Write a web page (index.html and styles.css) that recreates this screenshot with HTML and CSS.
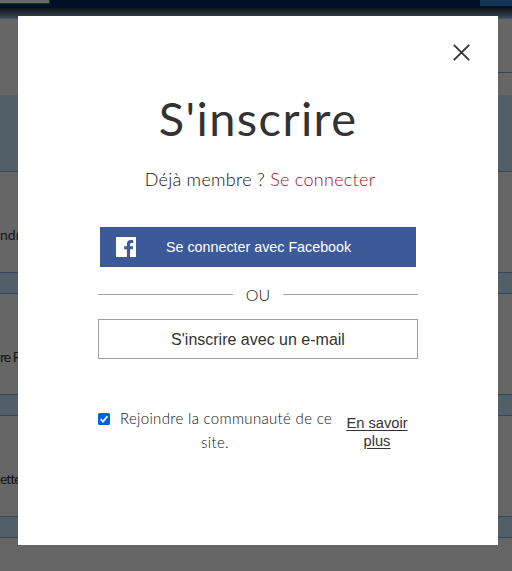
FILE: index.html
```
<!DOCTYPE html>
<html lang="fr">
<head>
    <meta charset="UTF-8">
    <meta name="viewport" content="width=device-width, initial-scale=1.0">
    <title>S'inscrire</title>
    <link rel="stylesheet" href="styles.css">
</head>
<body>
    <div class="page">
        <div class="header">
            <div class="header-left"></div>
            <div class="header-right"></div>
        </div>
        <div class="header-shadow"></div>
        <div class="top"><div class="top-line"></div></div>
        <div class="banner"></div>
        <div class="row">ndr</div>
        <div class="band"></div>
        <div class="row row-tight">re F</div>
        <div class="band"></div>
        <div class="row row-tight">ette</div>
        <div class="band"></div>
    </div>

    <div class="modal">
        <button class="close" aria-label="Fermer">
            <svg width="17" height="17" viewBox="0 0 17 17">
                <path d="M0.8 0.8L16.2 16.2M16.2 0.8L0.8 16.2" stroke="#333" stroke-width="1.8" fill="none"/>
            </svg>
        </button>
        <h1>S'inscrire</h1>
        <p class="member">Déjà membre ? <a href="#">Se connecter</a></p>
        <button class="facebook">
            <svg width="20" height="20" viewBox="0 0 20 20">
                <path fill="#fff" d="M0 0H20V20H14V12.3H16.7L17.1 9.3H14V7.4C14 6.5 14.3 5.9 15.6 5.9H17.2V3.2C16.9 3.1 16 3 14.9 3C12.5 3 10.9 4.4 10.9 7V9.3H8.1V12.3H10.9V20H0Z"/>
            </svg>
            <span>Se connecter avec Facebook</span>
        </button>
        <div class="or"><span>OU</span></div>
        <button class="email">S'inscrire avec un e-mail</button>
        <div class="community">
            <label class="join">
                <input type="checkbox" checked>
                <svg class="check" width="12" height="12" viewBox="0 0 12 12">
                    <rect width="12" height="12" rx="1.5" fill="#0060df"/>
                    <path d="M2.7 6.2L5 8.6L9.4 3.2" stroke="#fff" stroke-width="1.7" fill="none"/>
                </svg><span>Rejoindre la communauté de ce<br>site.</span>
            </label>
            <a class="more" href="#">En savoir<br>plus</a>
        </div>
    </div>
</body>
</html>
```

FILE: styles.css
```
* {
    box-sizing: border-box;
}
body {
    margin: 0;
    height: 571px;
    overflow: hidden;
    background-color: #666;
    font-family: Lato, sans-serif;
    color: #333;
}
h1, p {
    margin: 0;
}
button {
    border: 0;
    padding: 0;
    cursor: pointer;
}
.header {
    display: flex;
    justify-content: space-between;
    height: 8px;
    background-color: #001128;
}
.header-left {
    width: 50px;
    height: 4px;
    background-color: #666a66;
    border-bottom: 1px solid #1d351d;
    border-right: 1px solid #1d351d;
}
.header-right {
    width: 32px;
    height: 6px;
    background-color: #123655;
}
.header-shadow {
    height: 11px;
    background: linear-gradient(#10151b, #2c3844 65%, #465464);
}
.top {
    display: flex;
    justify-content: flex-end;
    height: 76px;
    padding-top: 53px;
}
.top-line {
    width: 32px;
    height: 1px;
    background-color: #38465a;
}
.banner {
    height: 77px;
    background-color: #525f69;
    border-bottom: 1px solid #38465a;
}
.row {
    height: 100px;
    padding-top: 53px;
    font-size: 14px;
    line-height: 20px;
    color: #151515;
}
.row-tight {
    letter-spacing: -1px;
}
.band {
    height: 22px;
    background-color: #525f69;
    border-top: 1px solid #38465a;
    border-bottom: 1px solid #38465a;
}
.modal {
    position: fixed;
    top: 16px;
    left: 18px;
    width: 480px;
    height: 529px;
    padding: 28px 80px 0;
    background-color: #fff;
}
.close {
    display: block;
    width: 17px;
    height: 17px;
    margin: 0 -52px 0 auto;
    background: none;
}
.close svg {
    display: block;
}
h1 {
    margin-top: 28px;
    height: 60px;
    font-size: 47px;
    line-height: 58px;
    font-weight: 400;
    letter-spacing: 1.4px;
    text-align: center;
    white-space: nowrap;
}
.member {
    margin-top: 18px;
    padding-left: 4px;
    font-size: 18px;
    line-height: 24px;
    font-weight: 300;
    letter-spacing: 0.28px;
    color: #111;
    text-align: center;
    white-space: nowrap;
}
.member a {
    color: #a30f1c;
    text-decoration: none;
}
.facebook {
    display: flex;
    align-items: center;
    width: 316px;
    height: 40px;
    margin: 36px 0 0 2px;
    padding-left: 16px;
    background-color: #3d5a98;
    color: #fff;
    font: 14.3px "Liberation Sans", Arial, sans-serif;
}
.facebook span {
    margin-left: 30px;
    white-space: nowrap;
}
.or {
    display: flex;
    align-items: center;
    height: 24px;
    margin-top: 15px;
    font-size: 16px;
    font-weight: 300;
    color: #111;
}
.or span {
    width: 50px;
    text-align: center;
}
.or::before,
.or::after {
    content: "";
    flex: 1;
    height: 1px;
    background-color: #a0a09f;
}
.email {
    display: block;
    width: 320px;
    height: 40px;
    margin-top: 13px;
    padding-top: 2px;
    border: 1px solid #a0a09f;
    background-color: #fff;
    color: #333;
    font: 16px "Liberation Sans", Arial, sans-serif;
}
.community {
    display: flex;
    align-items: flex-start;
    margin-top: 47px;
}
.join {
    width: 234px;
    font-size: 15px;
    line-height: 24px;
    font-weight: 300;
    letter-spacing: 0.32px;
    color: #111;
    text-align: center;
    white-space: nowrap;
}
.join input {
    display: none;
}
.check {
    margin-right: 10px;
    vertical-align: -1px;
}
.more {
    width: 62px;
    margin: 8px 0 0 14px;
    color: #333;
    font: 14.7px/18px "Liberation Sans", Arial, sans-serif;
    text-align: center;
    text-underline-offset: 2px;
    white-space: nowrap;
}
```
